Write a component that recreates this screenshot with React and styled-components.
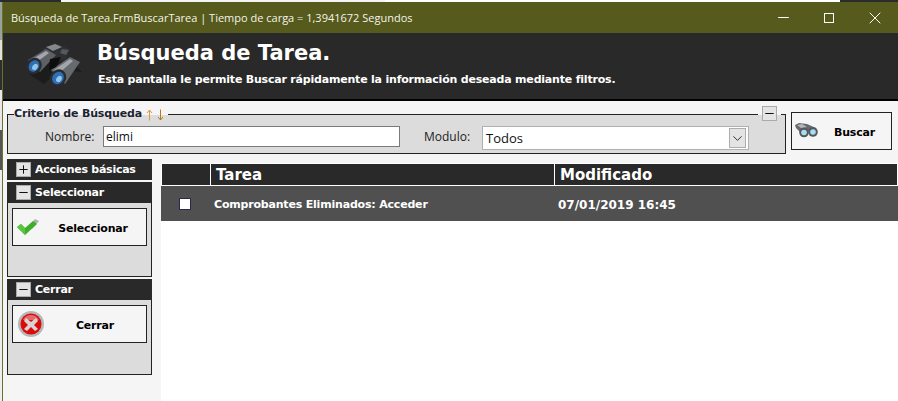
import React from "react";
import styled, { createGlobalStyle } from "styled-components";
import { Minus, Plus, ChevronDown, X } from "lucide-react";

const GlobalStyle = createGlobalStyle`
  html, body { margin: 0; padding: 0; overflow: hidden; }
  * { box-sizing: border-box; }
`;

const Desktop = styled.div`
  width: 898px;
  height: 401px;
  padding: 2px 0 0 2px;
  overflow: hidden;
  background:
    linear-gradient(90deg, #2b2b2b 0 61px, #f4f4f4 61px 385px, #ffffff 385px 840px, #2b2b2b 840px) top / 100% 2px no-repeat,
    linear-gradient(#9aa39a 0 40px, #e2e2d8 40px 60px, #2e2e2e 60px 90px, #e8e8e8 90px 130px, #555 130px 170px, #eeeeee 170px);
`;

const Window = styled.div`
  height: 399px;
  display: flex;
  flex-direction: column;
  border-left: 1px solid #6b6f30;
  background: #f5f5f5;
`;

const TitleBar = styled.div`
  height: 31px;
  flex: none;
  display: flex;
  align-items: center;
  background: #565a1c;
  color: #f4f4ea;
  font: 11px "Open Sans", sans-serif;
  padding-left: 8px;
`;

const TitleText = styled.span`
  flex: 1;
`;

const WinButton = styled.span`
  width: 46px;
  height: 31px;
  display: flex;
  align-items: center;
  justify-content: center;
  color: #fff;
`;

const MaxBox = styled.span`
  width: 10px;
  height: 10px;
  border: 1px solid #fff;
`;

const Banner = styled.div`
  height: 68px;
  flex: none;
  display: flex;
  background: #292929;
  border-bottom: 2px solid #000;
  color: #fff;
  font-family: "DejaVu Sans", sans-serif;
  font-weight: bold;
`;

const BannerIcon = styled.svg`
  width: 70px;
  height: 60px;
  margin: 7px 0 0 17px;
  flex: none;
`;

const BannerText = styled.div`
  margin-left: 7px;
`;

const BannerTitle = styled.div`
  font-size: 21px;
  line-height: 26px;
  margin-top: 7px;
`;

const BannerSub = styled.div`
  font-size: 11px;
  letter-spacing: -0.2px;
  line-height: 14px;
  margin: 7px 0 0 1px;
  white-space: nowrap;
`;

const SearchRow = styled.div`
  display: flex;
  align-items: flex-start;
  flex: none;
  padding-left: 4px;
`;

const Group = styled.div`
  position: relative;
  width: 779px;
  height: 40px;
  margin-top: 13px;
  display: flex;
  align-items: flex-start;
  padding-top: 11px;
  background: #dcdcdc;
  border: 1px solid #222;
`;

const Legend = styled.div`
  position: absolute;
  left: 6px;
  top: -9px;
  height: 15px;
  padding-right: 4px;
  display: flex;
  align-items: center;
  background: linear-gradient(#f5f5f5 0 9px, #dcdcdc 9px);
  color: #1c2433;
  font: bold 11px "DejaVu Sans", sans-serif;
  letter-spacing: -0.15px;
`;

const ArrowIcon = styled.svg`
  width: 7px;
  height: 12px;
  flex: none;
  margin: 2px 0 0 ${p => p.$left}px;
`;

const Toggle = styled.span`
  width: 15px;
  height: 15px;
  flex: none;
  display: flex;
  align-items: center;
  justify-content: center;
  background: #e4e4e4;
  border: 1px solid #aaa;
  color: #111;
`;

const GroupToggle = styled(Toggle)`
  position: absolute;
  top: -9px;
  right: 8px;

  &::before {
    content: "";
    position: absolute;
    top: 7px;
    left: -5px;
    width: 23px;
    height: 1px;
    background: linear-gradient(90deg, #f5f5f5 4px, transparent 4px 19px, #f5f5f5 19px);
  }
`;

const FieldLabel = styled.label`
  width: ${p => p.$width}px;
  margin-left: ${p => p.$left}px;
  padding-top: 2px;
  color: #222;
  font: 12px "Open Sans", sans-serif;
`;

const TextField = styled.div`
  width: 297px;
  height: 21px;
  background: #fff;
  border: 1px solid #7a7a7a;
  padding-left: 2px;
  color: #111;
  font: 12px/19px "Open Sans", sans-serif;
`;

const SelectField = styled.div`
  width: 267px;
  height: 24px;
  display: flex;
  align-items: center;
  justify-content: space-between;
  padding: 0 2px 0 3px;
  background: #fff;
  border: 1px solid #b0b0b0;
  color: #111;
  font: 13px "Open Sans", sans-serif;
`;

const SelectArrow = styled.span`
  width: 17px;
  height: 20px;
  display: flex;
  align-items: center;
  justify-content: center;
  background: #e4e4e4;
  border: 1px solid #adadad;
  color: #333;
`;

const ActionButton = styled.div`
  width: ${p => p.$width}px;
  height: 38px;
  flex: none;
  display: flex;
  align-items: center;
  padding-left: ${p => p.$pad}px;
  background: #f5f5f5;
  border: 1px solid #222;
  color: #000;
  font: bold 11px "DejaVu Sans", sans-serif;
  letter-spacing: -0.2px;
`;

const SearchButton = styled(ActionButton)`
  margin: 11px 0 0 5px;
`;

const ButtonLabel = styled.span`
  flex: 1;
  text-align: center;
  padding-top: 2px;
`;

const Main = styled.div`
  flex: 1;
  min-height: 0;
  display: flex;
  margin-top: 5px;
  padding-left: 4px;
`;

const Sidebar = styled.div`
  width: 145px;
  flex: none;
  display: flex;
  flex-direction: column;
  gap: 2px;
`;

const SectionHead = styled.div`
  height: 21px;
  display: flex;
  align-items: center;
  gap: 4px;
  padding-left: 9px;
  background: #292929;
  color: #fff;
  font: bold 11px "DejaVu Sans", sans-serif;
  letter-spacing: -0.25px;
`;

const SectionBody = styled.div`
  height: ${p => p.$height}px;
  padding: 5px 4px 0;
  background: #dcdcdc;
  border: 1px solid #222;
  border-top: none;
`;

const GridArea = styled.div`
  flex: 1;
  margin: 4px 0 0 9px;
  padding-top: 1px;
  background: #fff;
`;

const GridHead = styled.div`
  display: grid;
  grid-template-columns: 48px 343px 342px;
  gap: 1px;
  padding-left: 1px;
`;

const HeadCell = styled.div`
  height: 21px;
  padding: 1px 0 0 5px;
  background: #292929;
  color: #fff;
  font: bold 15px/21px "DejaVu Sans", sans-serif;
`;

const GridRow = styled.div`
  height: 35px;
  margin-top: 1px;
  display: grid;
  grid-template-columns: 50px 344px 1fr;
  align-items: center;
  background: #505050;
  color: #fff;
  font-family: "DejaVu Sans", sans-serif;
  font-weight: bold;
`;

const CheckBox = styled.span`
  justify-self: start;
  margin-left: 18px;
  width: 12px;
  height: 12px;
  background: #fff;
  border: 1px solid #2a2a4a;
`;

const RowText = styled.span`
  padding: 2px 0 0 3px;
  white-space: nowrap;
  font-size: ${p => p.$size}px;
  letter-spacing: ${p => p.$spacing || 0}px;
`;

const Binoculars = () => (
  <>
    <path d="M9 34 L24 44 L40 30 L62 32 L54 24 L30 20 Z" fill="#141414" opacity="0.6" />
    <path d="M22 9 L35 3 L50 9 L46 19 L30 21 Z" fill="#2f3033" />
    <path d="M26 7 L35 4 L42 7 L33 11 Z" fill="#85888c" />
    <path d="M42 9 L49 10 L46 15 L40 13 Z" fill="#55585c" />
    <path d="M8 20 L26 9 L36 15 L20 32 Z" fill="#5d6064" />
    <path d="M11 20 L26 11 L29 13 L14 24 Z" fill="#a3a6aa" />
    <path d="M31 30 L50 17 L60 22 L45 44 Z" fill="#666a6e" />
    <path d="M34 30 L50 19 L53 21 L38 34 Z" fill="#a3a6aa" />
    <path d="M30 19 L41 17 L36 27 L29 30 Z" fill="#0d0d0e" />
    <ellipse cx="14" cy="26" rx="7.5" ry="8.5" transform="rotate(35 14 26)" fill="#2a2c30" />
    <ellipse cx="14" cy="26" rx="5" ry="6" transform="rotate(35 14 26)" fill="#2f6fb4" />
    <ellipse cx="15" cy="27" rx="2.5" ry="3.5" transform="rotate(35 15 27)" fill="#8fc6ee" />
    <ellipse cx="38" cy="38" rx="8" ry="9" transform="rotate(35 38 38)" fill="#2a2c30" />
    <ellipse cx="38" cy="38" rx="5.5" ry="6.5" transform="rotate(35 38 38)" fill="#2f6fb4" />
    <ellipse cx="39" cy="39" rx="2.5" ry="3.5" transform="rotate(35 39 39)" fill="#8fc6ee" />
  </>
);

const SmallBinoculars = () => (
  <svg width="24" height="16" viewBox="0 0 24 16" style={{ marginTop: -3 }}>
    <path d="M1 3 L5 1 L13 2 L22 6 L22 9 L14 9 L6 10 L2 6 Z" fill="#66696d" />
    <path d="M3 3 L8 2 L13 5 L7 6 Z" fill="#b4b7ba" />
    <circle cx="10" cy="10.5" r="4.8" fill="#54575b" />
    <circle cx="10" cy="10.5" r="2.8" fill="#a9dcf4" />
    <circle cx="19" cy="10" r="4.8" fill="#54575b" />
    <circle cx="19" cy="10" r="2.8" fill="#a9dcf4" />
  </svg>
);

const CheckIcon = () => (
  <svg width="24" height="20" viewBox="0 0 24 20">
    <path d="M12 10 L19 2 L23 4 L16 12 Z" fill="#a9b3a9" />
    <path d="M1 10 L5 7 L9 11 L17 4 L21 7 L9 18 Z" fill="#3fae2a" />
    <path d="M1 10 L5 7 L9 11 L9 18 Z" fill="#5cc43f" />
  </svg>
);

const CloseIcon = () => (
  <svg width="26" height="26" viewBox="0 0 26 26">
    <circle cx="13" cy="13" r="13" fill="#b3b8b8" />
    <circle cx="13" cy="13" r="10.5" fill="#dd0a0a" />
    <path d="M5 9 A 9 9 0 0 1 21 9 Z" fill="#e56a6a" />
    <path d="M8 7 L13 11 L18 7 L20 10 L16 14 L20 18 L17 20 L13 16 L9 20 L6 18 L10 14 L6 10 Z" fill="#d8d4d4" />
  </svg>
);

export default function App() {
  return (
    <>
      <GlobalStyle />
      <Desktop>
        <Window>
          <TitleBar>
            <TitleText>Búsqueda de Tarea.FrmBuscarTarea | Tiempo de carga = 1,3941672 Segundos</TitleText>
            <WinButton><Minus size={17} strokeWidth={1} absoluteStrokeWidth /></WinButton>
            <WinButton><MaxBox /></WinButton>
            <WinButton><X size={20} strokeWidth={1} absoluteStrokeWidth /></WinButton>
          </TitleBar>
          <Banner>
            <BannerIcon viewBox="0 0 70 60"><Binoculars /></BannerIcon>
            <BannerText>
              <BannerTitle>Búsqueda de Tarea.</BannerTitle>
              <BannerSub>Esta pantalla le permite Buscar rápidamente la información deseada mediante filtros.</BannerSub>
            </BannerText>
          </Banner>
          <SearchRow>
            <Group>
              <Legend>
                Criterio de Búsqueda
                <ArrowIcon $left={4} viewBox="0 0 7 12" fill="none" stroke="#e0963c">
                  <path d="M3.5 11.5 V1 M1 4 L3.5 1 L6 4" />
                </ArrowIcon>
                <ArrowIcon $left={4} viewBox="0 0 7 12" fill="none" stroke="#b9781c">
                  <path d="M3.5 0.5 V11 M1 8 L3.5 11 L6 8" />
                </ArrowIcon>
              </Legend>
              <GroupToggle><Minus size={13} strokeWidth={1} absoluteStrokeWidth /></GroupToggle>
              <FieldLabel $left={37} $width={58}>Nombre:</FieldLabel>
              <TextField>elimi</TextField>
              <FieldLabel $left={24} $width={58}>Modulo:</FieldLabel>
              <SelectField>
                Todos
                <SelectArrow><ChevronDown size={15} strokeWidth={1} absoluteStrokeWidth /></SelectArrow>
              </SelectField>
            </Group>
            <SearchButton $width={101} $pad={2}>
              <SmallBinoculars />
              <ButtonLabel>Buscar</ButtonLabel>
            </SearchButton>
          </SearchRow>
          <Main>
            <Sidebar>
              <SectionHead><Toggle><Plus size={13} strokeWidth={1} absoluteStrokeWidth /></Toggle>Acciones básicas</SectionHead>
              <div>
                <SectionHead><Toggle><Minus size={13} strokeWidth={1} absoluteStrokeWidth /></Toggle>Seleccionar</SectionHead>
                <SectionBody $height={74}>
                  <ActionButton $width={135} $pad={3}>
                    <CheckIcon />
                    <ButtonLabel>Seleccionar</ButtonLabel>
                  </ActionButton>
                </SectionBody>
              </div>
              <div>
                <SectionHead><Toggle><Minus size={13} strokeWidth={1} absoluteStrokeWidth /></Toggle>Cerrar</SectionHead>
                <SectionBody $height={75}>
                  <ActionButton $width={135} $pad={5}>
                    <CloseIcon />
                    <ButtonLabel>Cerrar</ButtonLabel>
                  </ActionButton>
                </SectionBody>
              </div>
            </Sidebar>
            <GridArea>
              <GridHead>
                <HeadCell />
                <HeadCell>Tarea</HeadCell>
                <HeadCell>Modificado</HeadCell>
              </GridHead>
              <GridRow>
                <CheckBox />
                <RowText $size={11} $spacing={-0.19}>Comprobantes Eliminados: Acceder</RowText>
                <RowText $size={12}>07/01/2019 16:45</RowText>
              </GridRow>
            </GridArea>
          </Main>
        </Window>
      </Desktop>
    </>
  );
}
